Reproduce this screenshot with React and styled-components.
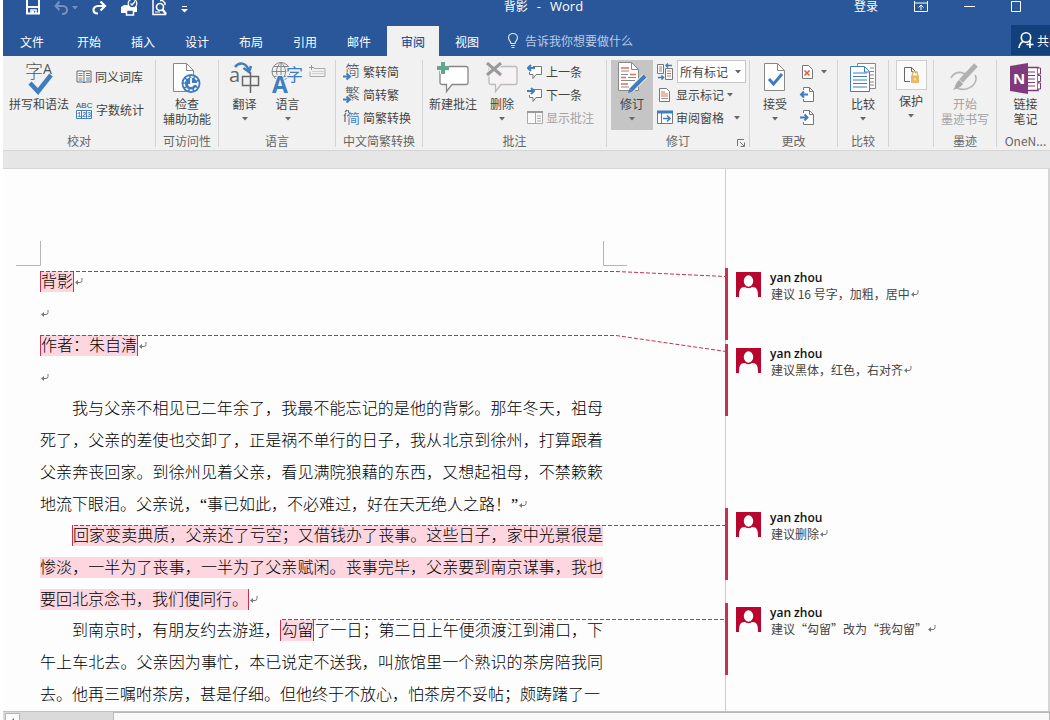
import React from 'react';

import styled, { createGlobalStyle, css } from 'styled-components';

const colors = {
  brand: '#2a579a',
  brandDark: '#12407a',
  ribbon: '#f1f1f1',
  line: '#d2d2d2',
  text: '#444444',
  muted: '#666666',
  disabled: '#a3a3a3',
  accent: '#3f7dbf',
  comment: '#b8062f',
  commentBar: '#c7304f',
  commentFill: '#fdd6df',
};

const uiFont = '"Noto Sans CJK SC", "Open Sans", sans-serif';

const GlobalStyle = createGlobalStyle`
  * {
    box-sizing: border-box;
  }

  body {
    margin: 0;
    background: #ffffff;
    font-family: ${uiFont};
    font-size: 12px;
  }

  button {
    margin: 0;
    padding: 0;
    border: 0;
    background: none;
    color: inherit;
    font: inherit;
    white-space: nowrap;
  }

  svg {
    display: block;
    flex: none;
  }
`;

/* ---------- window ---------- */

const Window = styled.div`
  display: flex;
  flex-direction: column;
  height: 100vh;
  padding-left: 3px;
  overflow: hidden;
`;

const Header = styled.header`
  background: ${colors.brand};
  color: #ffffff;
`;

const TitleBar = styled.div`
  display: grid;
  grid-template-columns: 1fr auto 1fr;
  height: 25px;
  padding: 0 29px 0 23px;
`;

const QuickAccess = styled.div`
  display: flex;
  align-items: flex-start;
  gap: 14px;
`;

const QuickButton = styled.button`
  display: flex;
  align-items: center;
  gap: 4px;
  height: 15px;
  opacity: ${({ $dim }) => ($dim ? 0.35 : 1)};
`;

const Title = styled.h1`
  display: flex;
  gap: 9px;
  margin: 0 0 0 40px;
  font-size: 12px;
  font-weight: 400;
  line-height: 12px;
`;

const TitleLatin = styled.span`
  font-family: 'Open Sans', sans-serif;
  font-size: 13px;
`;

const WindowControls = styled.div`
  display: flex;
  justify-content: flex-end;
  gap: 36px;
  height: 12px;
  line-height: 12px;
`;

const TabBar = styled.nav`
  display: flex;
  height: 31px;
`;

const Tab = styled.button`
  flex: none;
  width: ${({ $first }) => ($first ? 58 : 52)}px;
  margin: 1px 1px 0;
  margin-left: ${({ $first }) => ($first ? 0 : 1)}px;
  color: #ffffff;

  ${({ $active }) =>
    $active &&
    css`
      background: ${colors.ribbon};
      color: ${colors.brand};
      font-weight: 500;
    `}
`;

const TellMe = styled.button`
  display: flex;
  align-items: center;
  gap: 6px;
  margin-left: 13px;
  color: #b9cbe5;
`;

const ShareButton = styled.button`
  display: flex;
  flex: 0 0 39px;
  align-items: center;
  gap: 3px;
  height: 30px;
  margin-left: auto;
  padding-left: 7px;
  overflow: hidden;
  background: ${colors.brandDark};
`;

/* ---------- ribbon ---------- */

const Ribbon = styled.div`
  display: flex;
  padding: 4px 0 3px;
  overflow: hidden;
  background: ${colors.ribbon};
  color: ${colors.text};
`;

const StyledGroup = styled.section`
  display: flex;
  flex: ${({ $width }) => ($width ? `0 0 ${$width}px` : '1 0 58px')};
  flex-direction: column;
  justify-content: space-between;
  height: 87px;
  border-right: 1px solid ${colors.line};
`;

const GroupBody = styled.div`
  display: flex;
  gap: ${({ $gap = 0 }) => $gap}px;
  justify-content: ${({ $center }) => ($center ? 'center' : 'flex-start')};
  padding-left: ${({ $inset = 0 }) => $inset}px;
`;

const GroupLabel = styled.div`
  display: flex;
  justify-content: center;
  position: relative;
  color: ${colors.muted};
  line-height: 12px;
  white-space: nowrap;
`;

const Launcher = styled.button`
  position: absolute;
  right: 4px;
  top: 4px;
`;

const BigButton = styled.button`
  display: flex;
  flex: none;
  flex-direction: column;
  align-items: center;
  width: ${({ $width }) => ($width ? `${$width}px` : 'auto')};
  height: 70px;
  background: ${({ $pressed }) => ($pressed ? '#c5c5c5' : 'none')};
  color: ${({ $disabled }) => ($disabled ? colors.disabled : 'inherit')};
  line-height: 15px;
`;

const BigIcon = styled.span`
  display: flex;
  align-items: center;
  justify-content: center;
  height: 36px;
`;

const ProtectIcon = styled(BigIcon)`
  width: 31px;
  height: 30px;
  margin-bottom: 3px;
  border: 1px solid #cfcfcf;
  background: #fafafa;
`;

const CaretSlot = styled.span`
  display: flex;
  align-items: center;
  height: 15px;
`;

const Stack = styled.div`
  display: flex;
  flex-direction: column;
`;

const SmallButton = styled.button`
  display: flex;
  align-items: center;
  gap: ${({ $gap = 3 }) => $gap}px;
  height: ${({ $tall }) => ($tall ? 33 : 23)}px;
  color: ${({ $disabled }) => ($disabled ? colors.disabled : 'inherit')};
`;

const PaneLabel = styled.span`
  min-width: 55px;
  text-align: left;
`;

const MarkupRow = styled.div`
  display: flex;
  align-items: center;
  gap: 3px;
  height: 23px;
`;

const SelectBox = styled.label`
  display: flex;
  align-items: center;
  position: relative;
  width: 69px;
  height: 23px;
  border: 1px solid #c6c6c6;
  background: #ffffff;

  svg {
    position: absolute;
    right: 4px;
    pointer-events: none;
  }
`;

const MarkupSelect = styled.select`
  width: 100%;
  height: 21px;
  padding: 0 2px;
  border: 0;
  background: none;
  color: ${colors.text};
  font: inherit;
  appearance: none;
`;

const RulerStrip = styled.div`
  flex: none;
  height: 19px;
  border-top: 1px solid #d5d5d5;
  border-bottom: 1px solid #d5d5d5;
  background: #e6e6e6;
`;

/* ---------- document ---------- */

const Workspace = styled.main`
  display: flex;
  flex: 1;
  position: relative;
  min-height: 0;
  overflow: hidden;
  border-right: 2px solid #d6d6d6;
  background: #fdfdfd;
`;

const Page = styled.article`
  flex: 0 0 722px;
  padding: 97px 122px 0 37px;
  color: #000000;
  font-family: 'Liberation Serif', 'Noto Sans CJK SC', sans-serif;
  font-size: 16px;
  font-weight: 300;
  line-height: 32px;
`;

const Heading = styled.p`
  margin: 0;
`;

const Paragraph = styled.p`
  margin: -1px 0 0;
  text-align: justify;
  text-indent: 32px;
  text-spacing-trim: space-all;
`;

const Marked = styled.mark`
  padding: 2px 0;
  border: solid ${colors.commentBar};
  border-width: 0 1px;
  background: ${colors.commentFill};
  color: inherit;
`;

const Guides = styled.svg`
  position: absolute;
  top: 0;
  left: 0;
  pointer-events: none;
`;

const CommentPane = styled.aside`
  flex: 1;
  padding-top: 99px;
  border-left: 1px solid #cccccc;
`;

const CommentCard = styled.section`
  display: flex;
  gap: 9px;
  height: 72px;
  margin: ${({ $gap }) => $gap}px 0 0 -1px;
  border-left: 3px solid ${colors.commentBar};
  padding: 4px 0 0 8px;
`;

const Author = styled.h2`
  margin: 0;
  color: #111111;
  font-family: 'Open Sans', sans-serif;
  font-size: 12px;
  font-weight: 600;
  line-height: 12px;
`;

const CommentText = styled.p`
  margin: 1px 0 0 1px;
  color: #444444;
  line-height: 18px;
  white-space: nowrap;
  text-spacing-trim: space-all;
`;

const StyledReturn = styled.svg`
  display: inline-block;
  margin-left: 1px;
  vertical-align: 1px;
`;

const ScrollBar = styled.div`
  display: flex;
  flex: none;
  height: 9px;
  border-top: 1px solid #c0c0c0;
  background: #dadada;
  overflow: hidden;
`;

const ScrollArrow = styled.button`
  flex: 0 0 15px;
  height: 16px;
  margin: 1px 93px 0 2px;
  border: 1px solid #b5b5b5;
  background: #fdfdfd;

  svg {
    margin: 2px 0 0 3px;
  }
`;

const ScrollThumb = styled.div`
  flex: 1;
  height: 16px;
  border: 1px solid #b9b9b9;
  background: #f9f9f9;
`;

/* ---------- icons ---------- */

const Icon = ({ w, h, children }) => (
  <svg width={w} height={h} viewBox={`0 0 ${w} ${h}`} fill="none" aria-hidden="true">
    {children}
  </svg>
);

const Caret = ({ color = '#666666' }) => (
  <Icon w={6} h={4}>
    <path d="M0 0h6L3 3.500z" fill={color} />
  </Icon>
);

const ReturnMark = () => (
  <StyledReturn width="8" height="8" viewBox="0 0 8 8" fill="none" aria-hidden="true">
    <path d="M7 0v2.500q0 2-2 2H1" stroke="#777777" />
    <path d="M0 4.500l3-2.500v5z" fill="#777777" />
  </StyledReturn>
);

const SaveIcon = () => (
  <Icon w={14} h={15}>
    <path d="M1 0v13.500h12V0M1 7h12" stroke="#fff" strokeWidth="2" />
    <path d="M5 14v-4h5v4" stroke="#fff" strokeWidth="1.500" />
    <path d="M6 11h2v3H6z" fill="#fff" />
  </Icon>
);

const UndoIcon = () => (
  <Icon w={14} h={14}>
    <path d="M1 5h7.500c3 0 4.500 2 4.500 4 0 2.500-2 4-5 4" stroke="#fff" strokeWidth="2" />
    <path d="M5.500 .5L1.500 5l4 4" stroke="#fff" strokeWidth="2" />
  </Icon>
);

const RedoIcon = () => (
  <Icon w={15} h={14}>
    <path d="M13 5H6C3 5 1.500 7 1.500 9c0 2.500 1.500 3.500 4.500 3.500" stroke="#fff" strokeWidth="2.200" />
    <path d="M8.500 .5L13 5 8.500 9.500" stroke="#fff" strokeWidth="2.200" />
  </Icon>
);

const PrintIcon = () => (
  <Icon w={17} h={16}>
    <path d="M0 7l3-2h11l2 2v5h-3v-2H5v3H0z" fill="#fff" />
    <path d="M5.500 10h7v5h-7z" fill={colors.brand} stroke="#fff" strokeWidth="1.500" />
    <circle cx="11.500" cy="3.500" r="4.300" fill={colors.brand} stroke="#fff" strokeWidth="1.300" />
    <path d="M9.500 3.500l1.500 1.500 3-3.500" stroke="#fff" strokeWidth="1.300" />
  </Icon>
);

const PreviewIcon = () => (
  <Icon w={15} h={16}>
    <path d="M1 0v14.500h12.500V13M8 .5h2.500L13 3v2" stroke="#fff" strokeWidth="1.500" />
    <circle cx="8" cy="7" r="3.500" stroke="#fff" strokeWidth="1.700" />
    <path d="M10.500 9.500l3.500 4.500" stroke="#fff" strokeWidth="2.200" />
    <path d="M3 12h5" stroke="#fff" />
  </Icon>
);

const CustomizeIcon = () => (
  <Icon w={7} h={11}>
    <path d="M1 4.500h5" stroke="#fff" />
    <path d="M0 7h7L3.500 10.500z" fill="#fff" />
  </Icon>
);

const RibbonOptionsIcon = () => (
  <Icon w={14} h={11}>
    <path d="M.5 0v10.500h13V0M0 2h14M7 9V4.500M4.500 6.500L7 4l2.500 2.500" stroke="#fff" />
  </Icon>
);

const MinimizeIcon = () => (
  <Icon w={11} h={11}>
    <path d="M0 5.500h11" stroke="#fff" />
  </Icon>
);

const MaximizeIcon = () => (
  <Icon w={10} h={11}>
    <path d="M.5 .5h9v10h-9z" stroke="#fff" />
  </Icon>
);

const BulbIcon = () => (
  <Icon w={12} h={15}>
    <path d="M4 10.500C4 8.500 1.500 7.500 1.500 4.800a4.500 4.300 0 0 1 9 0C10.500 7.500 8 8.500 8 10.500zM4 12.500h4M4.500 14.500h3" stroke="#d5e0f0" strokeWidth="1.200" />
  </Icon>
);

const ShareIcon = () => (
  <Icon w={16} h={17}>
    <circle cx="8" cy="5.500" r="4.700" stroke="#fff" strokeWidth="1.600" />
    <path d="M1 16c.3-3.500 1.500-5 4-6.500M12 9v7M8.500 12.500h7" stroke="#fff" strokeWidth="1.600" />
  </Icon>
);

const SpellingIcon = () => (
  <Icon w={29} h={34}>
    <text x="0" y="17" fontSize="18" fontWeight="300" fill="#555">字</text>
    <text x="18" y="13" fontSize="14" fontFamily="Open Sans" fill="#555">A</text>
    <path d="M5 22l8 8.500L26 14" stroke={colors.accent} strokeWidth="4.500" />
  </Icon>
);

const ThesaurusIcon = () => (
  <Icon w={16} h={14}>
    <path d="M1 1h6l1 1 1-1h6v11H9l-1 1-1-1H1z" fill="#fff" stroke="#666" />
    <path d="M8 2v10" stroke="#666" />
    <path d="M2.500 3.500h4M2.500 8h4" stroke="#e0664b" />
    <path d="M2.500 5.500h4M2.500 10h4M10 3.500h4M10 5.500h4M10 8h4M10 10h4" stroke={colors.accent} />
  </Icon>
);

const WordCountIcon = () => (
  <Icon w={17} h={18}>
    <text x="0" y="7" fontSize="8" fontFamily="Liberation Sans" fill="#444">ABC</text>
    <path d="M.5 9.500h15v8H.5zM5.500 9v9M10.500 9v9" fill="#fff" stroke={colors.accent} />
    <text x="1" y="16" fontSize="7" fontFamily="Liberation Mono" fontWeight="700" fill={colors.accent}>1</text>
    <text x="6" y="16" fontSize="7" fontFamily="Liberation Mono" fontWeight="700" fill={colors.accent}>2</text>
    <text x="11" y="16" fontSize="7" fontFamily="Liberation Mono" fontWeight="700" fill={colors.accent}>3</text>
  </Icon>
);

const SheetPath = ({ w = 21, h = 28 }) => (
  <>
    <path d={`M.5 .5h${w - 8}l7 7v${h - 8}H.5z`} fill="#fff" stroke="#888" />
    <path d={`M${w - 7.5} .5v7h7`} stroke="#888" />
  </>
);

const AccessibilityIcon = () => (
  <Icon w={28} h={31}>
    <SheetPath w={21} h={29} />
    <circle cx="18" cy="20.500" r="9.500" fill={colors.accent} />
    <circle cx="18" cy="20.500" r="6.800" stroke="#fff" strokeWidth="1.500" strokeDasharray="3 1.500" />
    <path d="M18 15v6h6M16 21a2 2 0 1 0 4 0" stroke="#fff" strokeWidth="1.800" />
  </Icon>
);

const TranslateIcon = () => (
  <Icon w={32} h={34}>
    <text x="0" y="21" fontSize="20" fontFamily="Open Sans" fill="#666">a</text>
    <path d="M13.500 15.500h16v9h-16zM21.500 11v21" stroke="#666" strokeWidth="1.500" />
    <path d="M6 6c4-5 11-5 13.500 3" stroke={colors.accent} strokeWidth="2.500" />
    <path d="M14.500 7l5.500 4 2-6" stroke={colors.accent} strokeWidth="2.500" />
  </Icon>
);

const LanguageIcon = () => (
  <Icon w={33} h={34}>
    <circle cx="10" cy="10.500" r="9" stroke="#888" />
    <path d="M1 10.500h18M3 5.500h14M3 15.500h14M10 1.500v18M10 1.500c-6 5-6 13 0 18M10 1.500c6 5 6 13 0 18" stroke="#888" />
    <text x="1" y="32" fontSize="23" fontFamily="Open Sans" fontWeight="700" fill={colors.accent} stroke="#f1f1f1" strokeWidth="2" paintOrder="stroke">A</text>
    <text x="15" y="20" fontSize="17" fill={colors.accent} stroke="#f1f1f1" strokeWidth="2" paintOrder="stroke">字</text>
  </Icon>
);

const KeyboardIcon = () => (
  <Icon w={17} h={14}>
    <path d="M5 3.500h11v8H1v-5" stroke="#aaa" />
    <path d="M2.500 0v5M0 2.500h5" stroke="#999" />
    <path d="M3.500 6.500h11M3.500 8.500h11" stroke="#aaa" strokeDasharray="1 1" />
  </Icon>
);

const ConvertIcon = ({ glyph }) => (
  <Icon w={17} h={18}>
    <text x="2" y="13" fontSize="15" fontWeight="300" fill="#444">{glyph}</text>
    <path d="M0 13.500h6M3.500 10.500l3.500 3-3.500 3" stroke="#f1f1f1" strokeWidth="4" />
    <path d="M0 13.500h6M3.500 10.500l3.500 3-3.500 3" stroke={colors.accent} strokeWidth="2" />
  </Icon>
);

const ConvertBothIcon = () => (
  <Icon w={17} h={18}>
    <path d="M2 3l2-2M1 7l2-3M2 5v8M5 1l1 3M4 7l2-1" stroke="#666" strokeWidth="1.200" />
    <text x="4" y="14" fontSize="13" fill={colors.accent}>简</text>
  </Icon>
);

const NewCommentIcon = () => (
  <Icon w={32} h={32}>
    <path d="M3 6.500q0-2 2-2h24q2 0 2 2v14q0 2-2 2H15l-5.500 7v-7H6q-3 0-3-2z" fill="#fff" stroke="#888" strokeWidth="1.300" />
    <path d="M6 0v12M0 6h12" stroke="#f1f1f1" strokeWidth="6" />
    <path d="M6 0v12M0 6h12" stroke="#62a68d" strokeWidth="4" />
  </Icon>
);

const DeleteCommentIcon = () => (
  <Icon w={32} h={32}>
    <path d="M3 6.500q0-2 2-2h24q2 0 2 2v14q0 2-2 2H15l-5.500 7v-7H6q-3 0-3-2z" fill="#f6f2f6" stroke="#bbb" strokeWidth="1.300" />
    <path d="M1 1l14 12M15 1L1 13" stroke="#f1f1f1" strokeWidth="5" />
    <path d="M1 1l14 12M15 1L1 13" stroke="#999" strokeWidth="3" />
  </Icon>
);

const StepCommentIcon = ({ next }) => (
  <Icon w={16} h={16}>
    <path d="M6 2.500h8.500v8H9l-3 4v-4H2.500V8" fill="#fff" stroke="#777" />
    <path d={next ? 'M0 4h6M4 1l3 3-3 3' : 'M8 4H2M4 1L1 4l3 3'} stroke={colors.accent} strokeWidth="2" />
  </Icon>
);

const ShowCommentsIcon = () => (
  <Icon w={16} h={15}>
    <path d="M.5 1.500h15v12H.5z" fill="#f8f8f8" stroke="#aaa" />
    <path d="M0 2h16" stroke="#999" strokeWidth="2" />
    <path d="M8.500 3v10M10 6h4M10 8.500h4M10 11h4" stroke="#aaa" />
  </Icon>
);

const TrackIcon = () => (
  <Icon w={29} h={32}>
    <SheetPath w={21} h={29} />
    <path d="M3 6h8M3 15.500h5M12 12.500h6M3 22h7" stroke="#e0704f" strokeWidth="1.500" />
    <path d="M3 9h8M3 12.500h7M10 15.500h8M3 18.500h14M3 25h8" stroke="#888" />
    <path d="M27 14L13 28" stroke="#f1f1f1" strokeWidth="6" />
    <path d="M27 14L13 28" stroke={colors.accent} strokeWidth="4" />
    <path d="M10 31l1.500-4.500 3 3z" fill={colors.accent} />
  </Icon>
);

const DisplayReviewIcon = () => (
  <Icon w={17} h={17}>
    <path d="M.5 1.500h6v9h-6zM8.500 5.500h7v11h-7z" fill="#fff" stroke="#777" />
    <path d="M2 4h3M10 8h4M10 13h4" stroke="#e0704f" />
    <path d="M2 6h3M2 8h3M10 10.500h4" stroke="#888" />
    <path d="M9 2.500h6M11 .5l-2 2 2 2M1 14.500h5M4.500 12.500l2 2-2 2" stroke={colors.accent} strokeWidth="1.500" />
  </Icon>
);

const ShowMarkupIcon = () => (
  <Icon w={16} h={16}>
    <path d="M2.500 1.500h7l3 3v10h-10z" fill="#fff" stroke="#777" />
    <path d="M4 5h4M4 7h7M4 9h7" stroke="#e0704f" />
    <path d="M4 11.500h7" stroke="#999" />
  </Icon>
);

const ReviewPaneIcon = () => (
  <Icon w={16} h={15}>
    <path d="M.5 1.500h15v12H.5zM4.500 3v10" fill="#fff" stroke="#777" />
    <path d="M0 2h16" stroke={colors.accent} strokeWidth="3" />
    <path d="M6 8.500h6M10 5.500l3 3-3 3" stroke={colors.accent} strokeWidth="1.600" />
  </Icon>
);

const LauncherIcon = () => (
  <Icon w={8} h={8}>
    <path d="M.5 7V.5H7M3 3l4 4M7.500 3.500v4h-4" stroke="#777" />
  </Icon>
);

const AcceptIcon = () => (
  <Icon w={22} h={30}>
    <SheetPath w={21} h={28} />
    <path d="M5 16l4.500 5L18 11" stroke={colors.accent} strokeWidth="3" />
  </Icon>
);

const RejectIcon = () => (
  <Icon w={16} h={16}>
    <path d="M3.500 1.500h6l4 4v9h-10z" fill="#fff" stroke="#777" />
    <path d="M5.500 6.500l5 5M10.500 6.500l-5 5" stroke="#e05a3c" strokeWidth="1.600" />
  </Icon>
);

const StepChangeIcon = ({ next }) => (
  <Icon w={16} h={17}>
    <path d="M4.500 4V1.500h6l4 4v10h-10V13" fill="#fff" stroke="#777" />
    <path d="M10.500 1.500v4h4" stroke="#777" />
    <path d={next ? 'M1 8.500h6M5.500 5.500l3 3-3 3' : 'M9 8.500H3M5 5.500l-3 3 3 3'} stroke={colors.accent} strokeWidth="2" />
  </Icon>
);

const CompareIcon = () => (
  <Icon w={27} h={30}>
    <path d="M7.500 .5h18v25h-18z" fill="#fff" stroke="#888" />
    <path d="M20 5h4M20 8.500h4M20 12h4M20 15.500h4M20 19h4M20 22h4" stroke="#888" />
    <path d="M.5 3.500h14l5 5v20H.5z" fill="#fff" stroke={colors.accent} />
    <path d="M14.500 4v5h5M3 10h14M3 13.500h14M3 17h14M3 20.500h14M3 24h14" stroke={colors.accent} />
  </Icon>
);

const LockIcon = () => (
  <Icon w={17} h={18}>
    <path d="M7 15.500H1.500v-14h7l4 4V7M8.500 1.500v4h4" stroke="#666" />
    <path d="M8 9.500h8V17H8z" fill="#e9b867" />
    <path d="M9.500 10V8a2.500 2.500 0 0 1 5 0v2" stroke="#e9b867" strokeWidth="1.500" />
    <path d="M12 12v2.500" stroke="#fff" />
  </Icon>
);

const InkIcon = () => (
  <Icon w={29} h={30}>
    <path d="M1 15c3-6 10-7 14-4M25 12c3 5-1 12-9 14-5 1-8 0-10-2" stroke="#b5b5b5" strokeWidth="1.600" />
    <path d="M26 2L11 18" stroke="#b0b0b0" strokeWidth="5" />
    <path d="M9 17l4 4c-2 3-6 5-10 6 3-3 2-7 6-10z" fill="#a8a8a8" />
  </Icon>
);

const OneNoteIcon = () => (
  <Icon w={32} h={31}>
    <path d="M16 4.500h12v23H16z" fill="#fff" stroke="#80397b" strokeWidth="1.500" />
    <path d="M28 5h2.500v6H28M28 12.500h2.500v6H28M28 20h2.500v6H28" fill="#fff" stroke="#80397b" />
    <path d="M18 9h7M18 12.500h7M18 16h7M18 19.500h7M18 23h7" stroke="#80397b" />
    <path d="M0 3l18-3v31L0 28z" fill="#80397b" />
    <text x="3" y="21" fontSize="15" fontFamily="Open Sans" fontWeight="700" fill="#fff">N</text>
  </Icon>
);

const AvatarIcon = () => (
  <Icon w={25} h={25}>
    <path d="M0 0h25v25H0z" fill={colors.comment} />
    <path d="M3 25c0-7 1-10 6-10h7c5 0 6 3 6 10z" fill="#fff" />
    <ellipse cx="12.500" cy="9" rx="5.500" ry="6.500" fill="#fff" stroke={colors.comment} strokeWidth="1.500" />
  </Icon>
);

/* ---------- parts ---------- */

const Group = ({ label, width, inset, gap, center, launcher, children }) => (
  <StyledGroup $width={width}>
    <GroupBody $inset={inset} $gap={gap} $center={center}>
      {children}
    </GroupBody>
    <GroupLabel>
      {label}
      {launcher && (
        <Launcher aria-label="修订选项">
          <LauncherIcon />
        </Launcher>
      )}
    </GroupLabel>
  </StyledGroup>
);

const Big = ({ icon, lines, caret, width, pressed, disabled }) => (
  <BigButton $width={width} $pressed={pressed} $disabled={disabled}>
    <BigIcon>{icon}</BigIcon>
    {lines.map((line) => (
      <span key={line}>{line}</span>
    ))}
    {caret && (
      <CaretSlot>
        <Caret />
      </CaretSlot>
    )}
  </BigButton>
);

const tabs = ['文件', '开始', '插入', '设计', '布局', '引用', '邮件', '审阅', '视图'];

const comments = [
  { gap: 0, text: '建议 16 号字，加粗，居中' },
  { gap: 4, text: '建议黑体，红色，右对齐' },
  { gap: 92, text: '建议删除' },
  { gap: 23, text: '建议“勾留”改为“我勾留”' },
];

const AppHeader = () => (
  <Header>
    <TitleBar>
      <QuickAccess>
        <QuickButton aria-label="保存">
          <SaveIcon />
        </QuickButton>
        <QuickButton aria-label="撤消" $dim>
          <UndoIcon />
          <Caret color="#ffffff" />
        </QuickButton>
        <QuickButton aria-label="恢复">
          <RedoIcon />
        </QuickButton>
        <QuickButton aria-label="快速打印">
          <PrintIcon />
        </QuickButton>
        <QuickButton aria-label="打印预览">
          <PreviewIcon />
        </QuickButton>
        <QuickButton aria-label="自定义">
          <CustomizeIcon />
        </QuickButton>
      </QuickAccess>
      <Title>
        <span>背影</span>
        <TitleLatin>-</TitleLatin>
        <TitleLatin>Word</TitleLatin>
      </Title>
      <WindowControls>
        <button>登录</button>
        <button aria-label="功能区显示选项">
          <RibbonOptionsIcon />
        </button>
        <button aria-label="最小化">
          <MinimizeIcon />
        </button>
        <button aria-label="最大化">
          <MaximizeIcon />
        </button>
      </WindowControls>
    </TitleBar>
    <TabBar>
      {tabs.map((tab, index) => (
        <Tab key={tab} $first={index === 0} $active={tab === '审阅'}>
          {tab}
        </Tab>
      ))}
      <TellMe>
        <BulbIcon />
        告诉我你想要做什么
      </TellMe>
      <ShareButton>
        <ShareIcon />
        共享
      </ShareButton>
    </TabBar>
  </Header>
);

const ReviewRibbon = () => (
  <Ribbon>
    <Group label="校对" width={153} inset={6} gap={7}>
      <Big icon={<SpellingIcon />} lines={['拼写和语法']} width={60} />
      <Stack>
        <SmallButton $tall>
          <ThesaurusIcon />
          同义词库
        </SmallButton>
        <SmallButton $tall>
          <WordCountIcon />
          字数统计
        </SmallButton>
      </Stack>
    </Group>
    <Group label="可访问性" width={63} center>
      <Big icon={<AccessibilityIcon />} lines={['检查', '辅助功能']} />
    </Group>
    <Group label="语言" width={117} inset={4}>
      <Big icon={<TranslateIcon />} lines={['翻译']} width={43} caret />
      <Big icon={<LanguageIcon />} lines={['语言']} width={43} caret />
      <Stack>
        <SmallButton aria-label="输入法" $gap={0}>
          <KeyboardIcon />
        </SmallButton>
      </Stack>
    </Group>
    <Group label="中文简繁转换" width={87} inset={7}>
      <Stack>
        <SmallButton>
          <ConvertIcon glyph="简" />
          繁转简
        </SmallButton>
        <SmallButton>
          <ConvertIcon glyph="繁" />
          简转繁
        </SmallButton>
        <SmallButton>
          <ConvertBothIcon />
          简繁转换
        </SmallButton>
      </Stack>
    </Group>
    <Group label="批注" width={184} inset={6} gap={9}>
      <Big icon={<NewCommentIcon />} lines={['新建批注']} width={48} />
      <Big icon={<DeleteCommentIcon />} lines={['删除']} width={32} caret />
      <Stack>
        <SmallButton>
          <StepCommentIcon />
          上一条
        </SmallButton>
        <SmallButton>
          <StepCommentIcon next />
          下一条
        </SmallButton>
        <SmallButton $disabled>
          <ShowCommentsIcon />
          显示批注
        </SmallButton>
      </Stack>
    </Group>
    <Group label="修订" width={143} inset={4} gap={4} launcher>
      <Big icon={<TrackIcon />} lines={['修订']} width={42} caret pressed />
      <Stack>
        <MarkupRow>
          <DisplayReviewIcon />
          <SelectBox>
            <MarkupSelect aria-label="显示以供审阅" defaultValue="all">
              <option value="all">所有标记</option>
            </MarkupSelect>
            <Caret />
          </SelectBox>
        </MarkupRow>
        <SmallButton>
          <ShowMarkupIcon />
          显示标记
          <Caret />
        </SmallButton>
        <SmallButton>
          <ReviewPaneIcon />
          <PaneLabel>审阅窗格</PaneLabel>
          <Caret />
        </SmallButton>
      </Stack>
    </Group>
    <Group label="更改" width={88} inset={8} gap={7}>
      <Big icon={<AcceptIcon />} lines={['接受']} width={34} caret />
      <Stack>
        <SmallButton aria-label="拒绝" $gap={6}>
          <RejectIcon />
          <Caret />
        </SmallButton>
        <SmallButton aria-label="上一处">
          <StepChangeIcon />
        </SmallButton>
        <SmallButton aria-label="下一处">
          <StepChangeIcon next />
        </SmallButton>
      </Stack>
    </Group>
    <Group label="比较" width={51} center>
      <Big icon={<CompareIcon />} lines={['比较']} caret />
    </Group>
    <Group width={45} center>
      <BigButton>
        <ProtectIcon>
          <LockIcon />
        </ProtectIcon>
        <span>保护</span>
        <CaretSlot>
          <Caret />
        </CaretSlot>
      </BigButton>
    </Group>
    <Group label="墨迹" width={63} center>
      <Big icon={<InkIcon />} lines={['开始', '墨迹书写']} disabled />
    </Group>
    <Group label="OneN..." center>
      <Big icon={<OneNoteIcon />} lines={['链接', '笔记']} />
    </Group>
  </Ribbon>
);

// Page corners and the dashed leaders that tie each mark to its comment.
const PageGuides = () => (
  <Guides width="730" height="542" viewBox="0 0 730 542" fill="none" aria-hidden="true">
    <path d="M13 96.500h24.500V72M624 96.500h-23.500V72" stroke="#b5b5b5" />
    <g stroke={colors.commentBar} strokeDasharray="4 2">
      <path d="M37 102.500h576l110 5" />
      <path d="M37 166.500h576l110 16" />
      <path d="M71 356.500h652" />
      <path d="M279 450.500h444" />
    </g>
  </Guides>
);

const Comment = ({ gap, text }) => (
  <CommentCard $gap={gap}>
    <AvatarIcon />
    <div>
      <Author>yan zhou</Author>
      <CommentText>
        {text}
        <ReturnMark />
      </CommentText>
    </div>
  </CommentCard>
);

const App = () => {
  return (
    <>
      <GlobalStyle />
      <Window>
        <AppHeader />
        <ReviewRibbon />
        <RulerStrip />
        <Workspace>
          <Page>
            <Heading>
              <Marked>背影</Marked>
              <ReturnMark />
            </Heading>
            <Heading>
              <ReturnMark />
            </Heading>
            <Heading>
              <Marked>作者：朱自清</Marked>
              <ReturnMark />
            </Heading>
            <Heading>
              <ReturnMark />
            </Heading>
            <Paragraph>
              我与父亲不相见已二年余了，我最不能忘记的是他的背影。那年冬天，祖母死了，父亲的差使也交卸了，正是祸不单行的日子，我从北京到徐州，打算跟着父亲奔丧回家。到徐州见着父亲，看见满院狼藉的东西，又想起祖母，不禁簌簌地流下眼泪。父亲说，“事已如此，不必难过，好在天无绝人之路！”
              <ReturnMark />
            </Paragraph>
            <Paragraph>
              <Marked>
                回家变卖典质，父亲还了亏空；又借钱办了丧事。这些日子，家中光景很是惨淡，一半为了丧事，一半为了父亲赋闲。丧事完毕，父亲要到南京谋事，我也要回北京念书，我们便同行。
              </Marked>
              <ReturnMark />
            </Paragraph>
            <Paragraph>
              到南京时，有朋友约去游逛，<Marked>勾留</Marked>
              了一日；第二日上午便须渡江到浦口，下午上车北去。父亲因为事忙，本已说定不送我，叫旅馆里一个熟识的茶房陪我同去。他再三嘱咐茶房，甚是仔细。但他终于不放心，怕茶房不妥帖；颇踌躇了一
            </Paragraph>
          </Page>
          <CommentPane>
            {comments.map((comment) => (
              <Comment key={comment.text} {...comment} />
            ))}
          </CommentPane>
          <PageGuides />
        </Workspace>
        <ScrollBar>
          <ScrollArrow aria-label="向左滚动">
            <Icon w={6} h={8}>
              <path d="M5 0v8L1 4z" fill="#666" />
            </Icon>
          </ScrollArrow>
          <ScrollThumb />
        </ScrollBar>
      </Window>
    </>
  );
};

export default App;
